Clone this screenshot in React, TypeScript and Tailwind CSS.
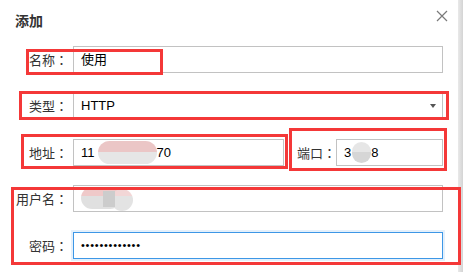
import React from "react";

const cjk = { fontFamily: '"Noto Sans CJK SC", "Liberation Sans", sans-serif' };
const colonFont = { fontFamily: '"Noto Sans CJK JP", "Noto Sans CJK TC", sans-serif' };

function Field({ children, focused = false, className = "" }: { children?: React.ReactNode; focused?: boolean; className?: string }) {
  return (
    <div
      className={
        "h-[27px] flex items-center pl-[7px] text-[13px] text-black bg-white border " +
        (focused ? "border-[#3d97e6] shadow-[0_0_0_2px_#e4f0fb]" : "border-[#c2c2c2]") +
        " " +
        className
      }
      style={{ fontFamily: '"Liberation Sans", "Noto Sans CJK SC", sans-serif' }}
    >
      {children}
    </div>
  );
}

function Label({ text, className = "w-[73px] pr-[5px]" }: { text: string; className?: string }) {
  return (
    <div className={"shrink-0 text-right text-[13px] text-[#333] leading-none " + className} style={cjk}>
      {text}
      <span style={colonFont}>：</span>
    </div>
  );
}

export default function App() {
  return (
    <div className="relative w-[466px] h-[272px] bg-white overflow-hidden flex">
      <div className="w-[458px] h-full flex flex-col pr-[15px]">
        <div className="flex items-center justify-between h-[44px] pl-[15px] pb-[3px]">
          <span className="text-[14px] font-bold text-[#333]" style={cjk}>添加</span>
          <svg width="12" height="12" viewBox="0 0 12 12" className="mr-[-5px] mb-[10px]">
            <path d="M1 1 L11 11 M11 1 L1 11" stroke="#7a7a7a" strokeWidth="1.2" fill="none" />
          </svg>
        </div>

        <div className="flex items-center mt-[2px]">
          <Label text="名称" />
          <Field className="flex-1">使用</Field>
        </div>

        <div className="flex items-center mt-[19px]">
          <Label text="类型" />
          <Field className="flex-1 justify-between pr-[6px]">
            <span>HTTP</span>
            <span className="w-0 h-0 border-l-[3px] border-r-[3px] border-t-[4px] border-l-transparent border-r-transparent border-t-[#555]" />
          </Field>
        </div>

        <div className="flex items-center mt-[20px]">
          <Label text="地址" />
          <Field className="w-[211px]">
            <span>11</span>
            <span className="ml-[3px] w-[59px] h-[23px] rounded-full bg-[linear-gradient(#ebc6c6_0%,#ebc6c6_50%,#e6e6e6_50%,#e6e6e6_100%)] blur-[0.5px]" />
            <span>70</span>
          </Field>
          <Label text="端口" className="w-[52px]" />
          <Field className="flex-1 pl-[4px]">
            <span>3</span>
            <span className="ml-[1px] w-[19px] h-[21px] rounded-full bg-[linear-gradient(#e6e6e6_0%,#e6e6e6_50%,#d6d6d6_50%,#d6d6d6_100%)]" />
            <span>8</span>
          </Field>
        </div>

        <div className="flex items-center mt-[19px]">
          <Label text="用户名" />
          <Field className="flex-1 items-start">
            <span className="relative mt-[1px] w-[56px] h-[26px]">
              <span className="absolute left-0 top-0 w-[40px] h-[22px] rounded-full bg-[linear-gradient(#efc9c9_0%,#efc9c9_40%,#e0e0e0_40%,#e0e0e0_100%)]" />
              <span className="absolute left-[30px] top-[2px] w-[22px] h-[22px] rounded-full bg-[linear-gradient(#f2d6d6_0%,#f2d6d6_30%,#e3e3e3_30%,#e3e3e3_100%)]" />
              <span className="absolute left-[22px] top-[4px] w-[12px] h-[16px] bg-[#cccccc]" />
            </span>
          </Field>
        </div>

        <div className="flex items-center mt-[20px]">
          <Label text="密码" />
          <Field focused className="flex-1 text-[#333]">
            <span className="text-[11px] tracking-[0.75px]">•••••••••••••</span>
          </Field>
        </div>
      </div>

      <div className="w-[5px] h-full bg-[linear-gradient(90deg,#e9e9e9,#d4d4d4)]" />
      <div className="flex-1 h-full bg-white" />

      <div className="absolute left-[26px] top-[49px] w-[137px] h-[26px] border-[3px] border-[#f43838]" />
      <div className="absolute left-[19px] top-[91px] w-[430px] h-[29px] border-[3px] border-[#f43838]" />
      <div className="absolute left-[21px] top-[134px] w-[267px] h-[35px] border-[3px] border-[#f43838]" />
      <div className="absolute left-[289px] top-[128px] w-[158px] h-[43px] border-[3px] border-[#f43838]" />
      <div className="absolute left-[11px] top-[187px] w-[450px] h-[78px] border-[3px] border-[#f43838]" />
    </div>
  );
}
